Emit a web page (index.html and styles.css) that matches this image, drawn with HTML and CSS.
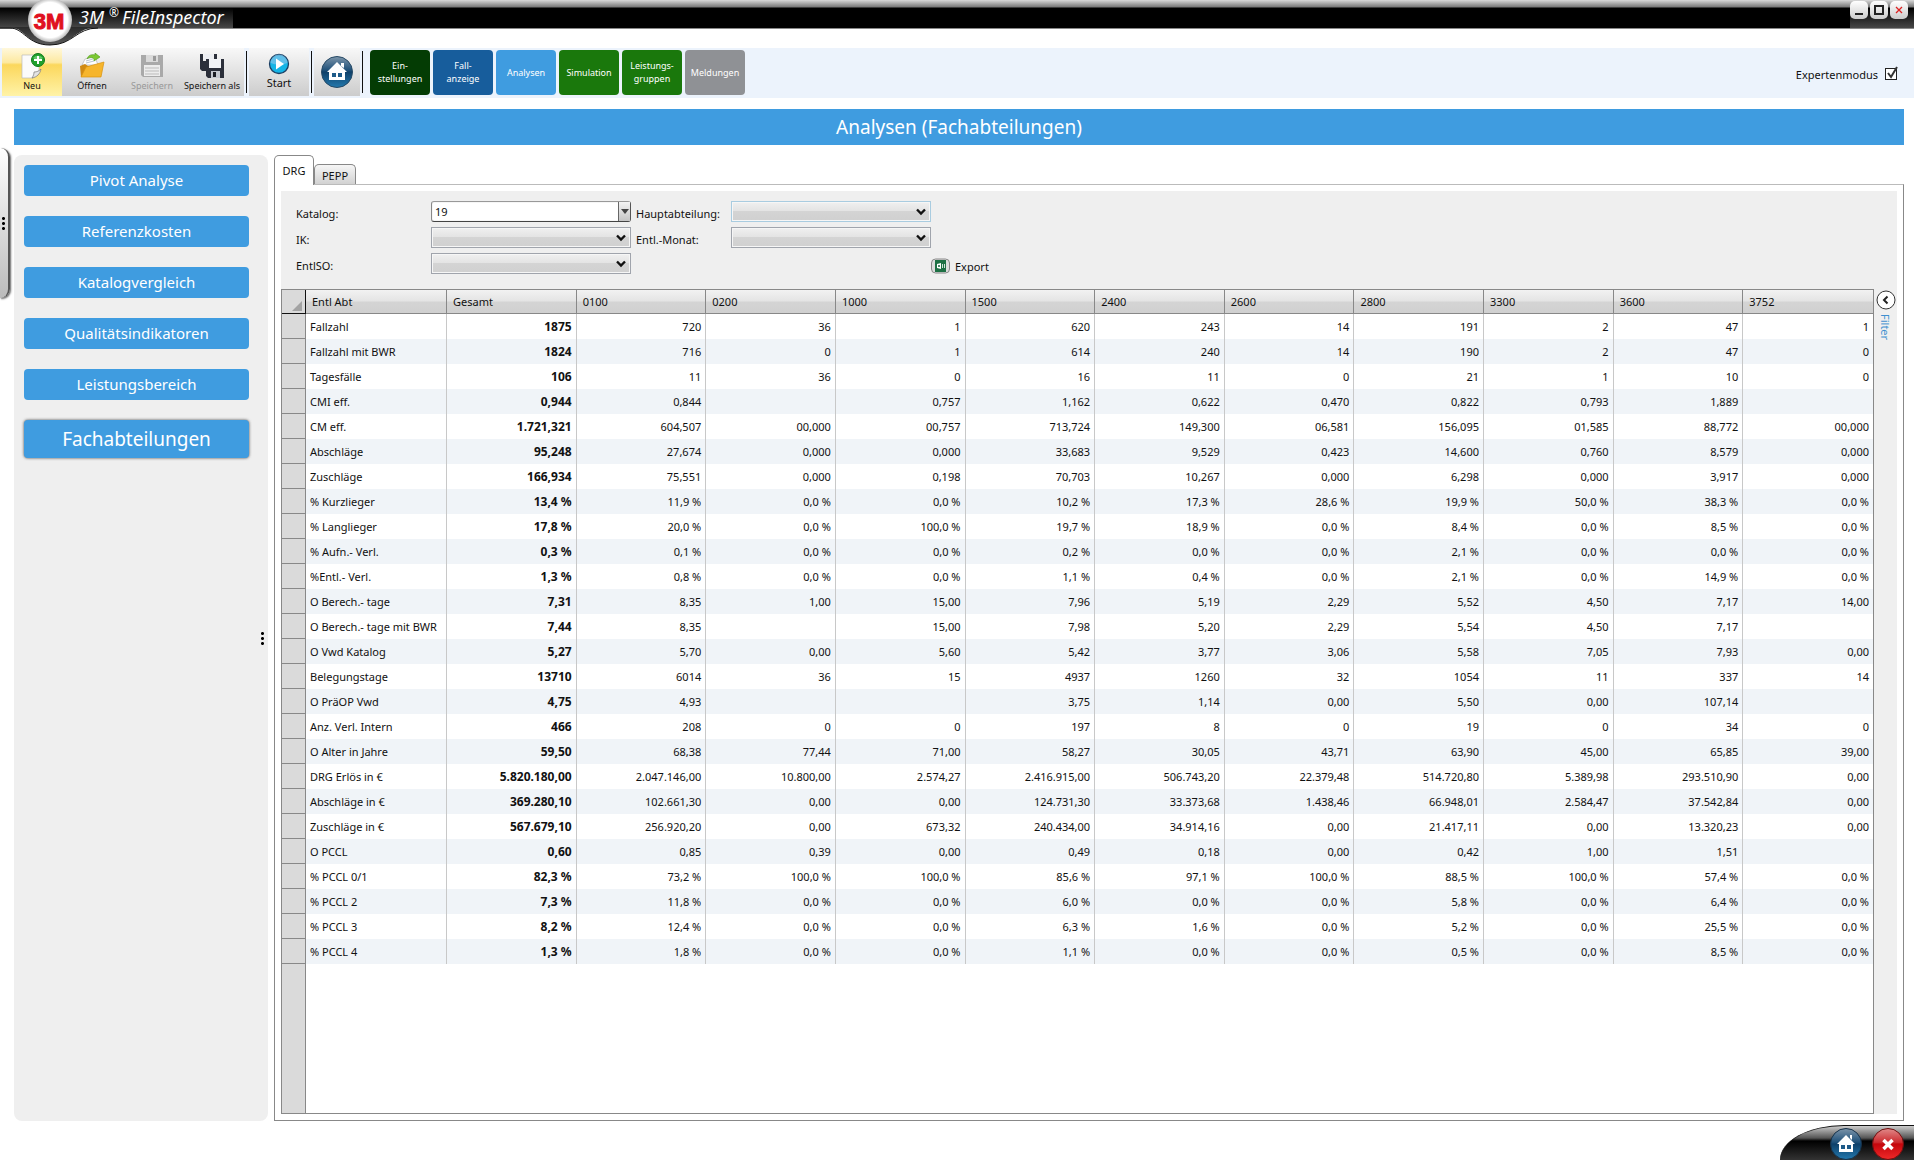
FILE: index.html
```html
<!DOCTYPE html>
<html lang="de">
    <head>
        <title>3M FileInspector</title>
        <meta charset="utf-8">
        <meta name="viewport" content="width=device-width, initial-scale=1">
        <link rel="stylesheet" href="styles.css">
    </head>
    <body>
        <header class="titlebar">
            <div class="brand">
                <svg class="logo" width="100" height="46" viewBox="0 0 100 46">
                    <defs>
                        <linearGradient id="bulge" x1="0" y1="0" x2="0" y2="1">
                            <stop offset="0" stop-color="#2a2a2a"/>
                            <stop offset="1" stop-color="#5a5a5a"/>
                        </linearGradient>
                        <radialGradient id="disc">
                            <stop offset="0.8" stop-color="#fff"/>
                            <stop offset="1" stop-color="#b8b8b8"/>
                        </radialGradient>
                    </defs>
                    <path d="M0 27 H10 C24 27 27 45 50 45 C73 45 76 27 98 27 Z" fill="url(#bulge)"/>
                    <path d="M0 28 H10 C24 28 27 45 50 45 C73 45 76 28 98 28" fill="none" stroke="#111"/>
                    <circle cx="50" cy="20" r="22" fill="url(#disc)"/>
                    <text x="49" y="29" class="logo-text">3M</text>
                </svg>
                <h1 class="app-name">3M<sup>®</sup>FileInspector</h1>
            </div>
            <div class="window-buttons">
                <button class="win-btn" aria-label="Minimieren"><svg width="12" height="12" viewBox="0 0 12 12"><path d="M2 10H10" stroke="#222" stroke-width="2"/></svg></button>
                <button class="win-btn" aria-label="Maximieren"><svg width="12" height="12" viewBox="0 0 12 12"><path d="M2 2H10V10H2Z" fill="none" stroke="#222" stroke-width="2"/></svg></button>
                <button class="win-btn" aria-label="Schließen"><svg width="12" height="12" viewBox="0 0 12 12"><path d="M3 3L9 9M9 3L3 9" stroke="#d22" stroke-width="1.3"/></svg></button>
            </div>
        </header>

        <div class="toolbar">
            <div class="tool-group">
                <button class="tool tool-new">
                    <svg width="26" height="26" viewBox="0 0 26 26">
                        <path d="M3 2H20V19L14 25H3Z" fill="#fbfbfb" stroke="#bbb" stroke-width=".7"/>
                        <path d="M22 16C21 21 18 24 13 25C15 22 15 20 15 19C18 19 20 18 22 16Z" fill="#e4e4e4" stroke="#777" stroke-width=".7"/>
                        <circle cx="19" cy="7" r="6.5" fill="#1fa02c" stroke="#0c7a18"/>
                        <path d="M14 5A6 5 0 0 1 24 5Q19 8 14 5" fill="#7fd986" opacity=".7"/>
                        <path d="M19 3V11M15 7H23" stroke="#fff" stroke-width="2"/>
                    </svg>
                    <span>Neu</span>
                </button>
                <button class="tool">
                    <svg width="26" height="26" viewBox="0 0 26 26">
                        <path d="M3 12L6 6L16 4L19 12Z" fill="#fff" stroke="#aaa" stroke-width=".6"/>
                        <path d="M7 8L14 6M7 10L15 8" stroke="#b9c4d0"/>
                        <path d="M2 24L1 13L6 11L9 13H21V22L20 24Z" fill="#d08a14"/>
                        <path d="M2 24L7 14L25 9L22 24Z" fill="#f6b52c" stroke="#d9920f" stroke-width=".7"/>
                        <path d="M8 6C9 2 13 1 16 2V0L21 4L15 8V6C13 4 10 4 8 6Z" fill="#7cc832" stroke="#4c9a17" stroke-width=".6"/>
                    </svg>
                    <span>Öffnen</span>
                </button>
                <button class="tool" disabled>
                    <svg width="26" height="26" viewBox="0 0 26 26">
                        <path d="M2 2H24V24H4L2 22Z" fill="#a9a9a9"/>
                        <path d="M7 2H19V9H7Z" fill="#dadada"/>
                        <path d="M14 3H17V8H14Z" fill="#999"/>
                        <path d="M5 12H21V23H5Z" fill="#ececec"/>
                        <path d="M6 15H20M6 18H20M6 21H20" stroke="#bbb"/>
                    </svg>
                    <span>Speichern</span>
                </button>
                <button class="tool">
                    <svg width="26" height="26" viewBox="0 0 26 26">
                        <path d="M1 1H4V8H15V1H18V18H3L1 16Z" fill="#2b2f3a"/>
                        <path d="M5 1H14V7H5Z" fill="#eceef2"/>
                        <path d="M7 6H25V25H9L7 23Z" fill="#2b2f3a"/>
                        <path d="M10 6H22V15H10Z" fill="#f1f3f6"/>
                        <path d="M12 18H21V25H12Z" fill="#c4c8cf"/>
                        <path d="M14 19H17V24H14Z" fill="#1b1d24"/>
                    </svg>
                    <span>Speichern als</span>
                </button>
            </div>
            <div class="separator"></div>
            <button class="tool tool-start">
                <svg width="22" height="22" viewBox="0 0 22 22">
                    <circle cx="11" cy="11" r="9.5" fill="#14b4e6" stroke="#1d3f63" stroke-width="1.3"/>
                    <path d="M2.500 10A8.500 8.500 0 0 1 19.500 10Q11 13 2.500 10Z" fill="#7fc3ea" opacity=".7"/>
                    <path d="M8 5.500L16 11L8 16.500Z" fill="#fff"/>
                </svg>
                <span>Start</span>
            </button>
            <div class="separator"></div>
            <button class="tool tool-home" aria-label="Startseite">
                <svg width="34" height="34" viewBox="0 0 34 34">
                    <defs>
                        <linearGradient id="blueball" x1="0" y1="0" x2="0" y2="1">
                            <stop offset="0" stop-color="#7d95aa"/>
                            <stop offset="0.450" stop-color="#1d4f78"/>
                            <stop offset="0.500" stop-color="#0f4069"/>
                            <stop offset="1" stop-color="#2379ae"/>
                        </linearGradient>
                    </defs>
                    <circle cx="17" cy="17" r="15.500" fill="url(#blueball)" stroke="#274a66"/>
                    <path d="M17 7L27 17H25V25H9V17H7Z" fill="#fff"/>
                    <path d="M21 8H24V13L21 11Z" fill="#fff"/>
                    <path d="M12 18H16V22H12ZM18 18H22V22H18Z" fill="#1d5a88"/>
                </svg>
            </button>
            <div class="separator"></div>
            <nav class="modules">
                <a href="#" class="module dark-green">Ein-<br>stellungen</a>
                <a href="#" class="module dark-blue">Fall-<br>anzeige</a>
                <a href="#" class="module blue">Analysen</a>
                <a href="#" class="module green">Simulation</a>
                <a href="#" class="module green">Leistungs-<br>gruppen</a>
                <a href="#" class="module gray">Meldungen</a>
            </nav>
            <label class="expert">Expertenmodus
                <span class="check">
                    <input type="checkbox" checked>
                    <svg width="14" height="14" viewBox="0 0 14 14"><path d="M3 7L6 11L12 1" fill="none" stroke="#333" stroke-width="2"/></svg>
                </span>
            </label>
        </div>

        <h2 class="page-title">Analysen (Fachabteilungen)</h2>

        <main class="workspace">
            <div class="drawer"><span class="dots"></span></div>
            <aside class="sidebar">
                <nav class="side-nav">
                    <a href="#" class="side-link">Pivot Analyse</a>
                    <a href="#" class="side-link">Referenzkosten</a>
                    <a href="#" class="side-link">Katalogvergleich</a>
                    <a href="#" class="side-link">Qualitätsindikatoren</a>
                    <a href="#" class="side-link">Leistungsbereich</a>
                    <a href="#" class="side-link active">Fachabteilungen</a>
                </nav>
                <span class="dots"></span>
            </aside>

            <section class="content">
                <div class="tabs">
                    <button class="tab current">DRG</button>
                    <button class="tab">PEPP</button>
                </div>
                <div class="panel">
                    <div class="panel-main">
                        <form class="filters">
                            <label for="katalog">Katalog:</label>
                            <div class="combo editable">
                                <select id="katalog"><option>19</option></select>
                                <span class="drop"><svg width="8" height="5" viewBox="0 0 8 5"><path d="M0 0H8L4 5Z" fill="#444"/></svg></span>
                            </div>
                            <label for="hauptabteilung">Hauptabteilung:</label>
                            <div class="combo focused">
                                <select id="hauptabteilung"><option></option></select>
                                <svg class="arrow" width="10" height="8" viewBox="0 0 10 8"><path d="M1 1.500L5 5.500L9 1.500" fill="none" stroke="#111" stroke-width="2.400"/></svg>
                            </div>
                            <span></span>

                            <label for="ik">IK:</label>
                            <div class="combo">
                                <select id="ik"><option></option></select>
                                <svg class="arrow" width="10" height="8" viewBox="0 0 10 8"><path d="M1 1.500L5 5.500L9 1.500" fill="none" stroke="#111" stroke-width="2.400"/></svg>
                            </div>
                            <label for="monat">Entl.-Monat:</label>
                            <div class="combo">
                                <select id="monat"><option></option></select>
                                <svg class="arrow" width="10" height="8" viewBox="0 0 10 8"><path d="M1 1.500L5 5.500L9 1.500" fill="none" stroke="#111" stroke-width="2.400"/></svg>
                            </div>
                            <span></span>

                            <label for="entliso">EntlSO:</label>
                            <div class="combo">
                                <select id="entliso"><option></option></select>
                                <svg class="arrow" width="10" height="8" viewBox="0 0 10 8"><path d="M1 1.500L5 5.500L9 1.500" fill="none" stroke="#111" stroke-width="2.400"/></svg>
                            </div>
                            <button type="button" class="export">
                                <svg width="19" height="16" viewBox="0 0 19 16">
                                    <rect x=".5" y="1" width="18" height="14" rx="4" fill="#ddd" stroke="#888"/>
                                    <rect x="4" y="2" width="11" height="12" fill="#1d7044"/>
                                    <path d="M6 6L10 5V11L6 10Z" fill="#fff"/>
                                    <path d="M7 7L9 9M9 7L7 9" stroke="#1d7044" stroke-width=".8"/>
                                    <path d="M11 6H12V10H11ZM13 6H14V10H13Z" fill="#cfe6d8"/>
                                </svg>
                                Export
                            </button>
                        </form>

                        <div class="grid">
                            <table>
                                <colgroup>
                                    <col class="col-head">
                                    <col class="col-label">
                                    <col span="11">
                                </colgroup>
                                <thead>
                                    <tr><th class="corner"><svg width="10" height="10" viewBox="0 0 10 10"><path d="M10 0V10H0Z" fill="#a3a3a3"/></svg></th><th>Entl Abt</th><th>Gesamt</th><th>0100</th><th>0200</th><th>1000</th><th>1500</th><th>2400</th><th>2600</th><th>2800</th><th>3300</th><th>3600</th><th>3752</th></tr>
                                </thead>
                                <tbody>
                                    <tr><th></th><td>Fallzahl</td><td>1875</td><td>720</td><td>36</td><td>1</td><td>620</td><td>243</td><td>14</td><td>191</td><td>2</td><td>47</td><td>1</td></tr>
                                    <tr><th></th><td>Fallzahl mit BWR</td><td>1824</td><td>716</td><td>0</td><td>1</td><td>614</td><td>240</td><td>14</td><td>190</td><td>2</td><td>47</td><td>0</td></tr>
                                    <tr><th></th><td>Tagesfälle</td><td>106</td><td>11</td><td>36</td><td>0</td><td>16</td><td>11</td><td>0</td><td>21</td><td>1</td><td>10</td><td>0</td></tr>
                                    <tr><th></th><td>CMI eff.</td><td>0,944</td><td>0,844</td><td></td><td>0,757</td><td>1,162</td><td>0,622</td><td>0,470</td><td>0,822</td><td>0,793</td><td>1,889</td><td></td></tr>
                                    <tr><th></th><td>CM eff.</td><td>1.721,321</td><td>604,507</td><td>00,000</td><td>00,757</td><td>713,724</td><td>149,300</td><td>06,581</td><td>156,095</td><td>01,585</td><td>88,772</td><td>00,000</td></tr>
                                    <tr><th></th><td>Abschläge</td><td>95,248</td><td>27,674</td><td>0,000</td><td>0,000</td><td>33,683</td><td>9,529</td><td>0,423</td><td>14,600</td><td>0,760</td><td>8,579</td><td>0,000</td></tr>
                                    <tr><th></th><td>Zuschläge</td><td>166,934</td><td>75,551</td><td>0,000</td><td>0,198</td><td>70,703</td><td>10,267</td><td>0,000</td><td>6,298</td><td>0,000</td><td>3,917</td><td>0,000</td></tr>
                                    <tr><th></th><td>% Kurzlieger</td><td>13,4 %</td><td>11,9 %</td><td>0,0 %</td><td>0,0 %</td><td>10,2 %</td><td>17,3 %</td><td>28,6 %</td><td>19,9 %</td><td>50,0 %</td><td>38,3 %</td><td>0,0 %</td></tr>
                                    <tr><th></th><td>% Langlieger</td><td>17,8 %</td><td>20,0 %</td><td>0,0 %</td><td>100,0 %</td><td>19,7 %</td><td>18,9 %</td><td>0,0 %</td><td>8,4 %</td><td>0,0 %</td><td>8,5 %</td><td>0,0 %</td></tr>
                                    <tr><th></th><td>% Aufn.- Verl.</td><td>0,3 %</td><td>0,1 %</td><td>0,0 %</td><td>0,0 %</td><td>0,2 %</td><td>0,0 %</td><td>0,0 %</td><td>2,1 %</td><td>0,0 %</td><td>0,0 %</td><td>0,0 %</td></tr>
                                    <tr><th></th><td>%Entl.- Verl.</td><td>1,3 %</td><td>0,8 %</td><td>0,0 %</td><td>0,0 %</td><td>1,1 %</td><td>0,4 %</td><td>0,0 %</td><td>2,1 %</td><td>0,0 %</td><td>14,9 %</td><td>0,0 %</td></tr>
                                    <tr><th></th><td>O Berech.- tage</td><td>7,31</td><td>8,35</td><td>1,00</td><td>15,00</td><td>7,96</td><td>5,19</td><td>2,29</td><td>5,52</td><td>4,50</td><td>7,17</td><td>14,00</td></tr>
                                    <tr><th></th><td>O Berech.- tage mit BWR</td><td>7,44</td><td>8,35</td><td></td><td>15,00</td><td>7,98</td><td>5,20</td><td>2,29</td><td>5,54</td><td>4,50</td><td>7,17</td><td></td></tr>
                                    <tr><th></th><td>O Vwd Katalog</td><td>5,27</td><td>5,70</td><td>0,00</td><td>5,60</td><td>5,42</td><td>3,77</td><td>3,06</td><td>5,58</td><td>7,05</td><td>7,93</td><td>0,00</td></tr>
                                    <tr><th></th><td>Belegungstage</td><td>13710</td><td>6014</td><td>36</td><td>15</td><td>4937</td><td>1260</td><td>32</td><td>1054</td><td>11</td><td>337</td><td>14</td></tr>
                                    <tr><th></th><td>O PräOP Vwd</td><td>4,75</td><td>4,93</td><td></td><td></td><td>3,75</td><td>1,14</td><td>0,00</td><td>5,50</td><td>0,00</td><td>107,14</td><td></td></tr>
                                    <tr><th></th><td>Anz. Verl. Intern</td><td>466</td><td>208</td><td>0</td><td>0</td><td>197</td><td>8</td><td>0</td><td>19</td><td>0</td><td>34</td><td>0</td></tr>
                                    <tr><th></th><td>O Alter in Jahre</td><td>59,50</td><td>68,38</td><td>77,44</td><td>71,00</td><td>58,27</td><td>30,05</td><td>43,71</td><td>63,90</td><td>45,00</td><td>65,85</td><td>39,00</td></tr>
                                    <tr><th></th><td>DRG Erlös in €</td><td>5.820.180,00</td><td>2.047.146,00</td><td>10.800,00</td><td>2.574,27</td><td>2.416.915,00</td><td>506.743,20</td><td>22.379,48</td><td>514.720,80</td><td>5.389,98</td><td>293.510,90</td><td>0,00</td></tr>
                                    <tr><th></th><td>Abschläge in €</td><td>369.280,10</td><td>102.661,30</td><td>0,00</td><td>0,00</td><td>124.731,30</td><td>33.373,68</td><td>1.438,46</td><td>66.948,01</td><td>2.584,47</td><td>37.542,84</td><td>0,00</td></tr>
                                    <tr><th></th><td>Zuschläge in €</td><td>567.679,10</td><td>256.920,20</td><td>0,00</td><td>673,32</td><td>240.434,00</td><td>34.914,16</td><td>0,00</td><td>21.417,11</td><td>0,00</td><td>13.320,23</td><td>0,00</td></tr>
                                    <tr><th></th><td>O PCCL</td><td>0,60</td><td>0,85</td><td>0,39</td><td>0,00</td><td>0,49</td><td>0,18</td><td>0,00</td><td>0,42</td><td>1,00</td><td>1,51</td><td></td></tr>
                                    <tr><th></th><td>% PCCL 0/1</td><td>82,3 %</td><td>73,2 %</td><td>100,0 %</td><td>100,0 %</td><td>85,6 %</td><td>97,1 %</td><td>100,0 %</td><td>88,5 %</td><td>100,0 %</td><td>57,4 %</td><td>0,0 %</td></tr>
                                    <tr><th></th><td>% PCCL 2</td><td>7,3 %</td><td>11,8 %</td><td>0,0 %</td><td>0,0 %</td><td>6,0 %</td><td>0,0 %</td><td>0,0 %</td><td>5,8 %</td><td>0,0 %</td><td>6,4 %</td><td>0,0 %</td></tr>
                                    <tr><th></th><td>% PCCL 3</td><td>8,2 %</td><td>12,4 %</td><td>0,0 %</td><td>0,0 %</td><td>6,3 %</td><td>1,6 %</td><td>0,0 %</td><td>5,2 %</td><td>0,0 %</td><td>25,5 %</td><td>0,0 %</td></tr>
                                    <tr><th></th><td>% PCCL 4</td><td>1,3 %</td><td>1,8 %</td><td>0,0 %</td><td>0,0 %</td><td>1,1 %</td><td>0,0 %</td><td>0,0 %</td><td>0,5 %</td><td>0,0 %</td><td>8,5 %</td><td>0,0 %</td></tr>
                                </tbody>
                            </table>
                        </div>
                    </div>
                    <button class="filter-toggle">
                        <svg width="20" height="20" viewBox="0 0 20 20">
                            <circle cx="10" cy="10" r="9" fill="#fff" stroke="#333"/>
                            <path d="M11.500 6.500L8 10L11.500 13.500" fill="none" stroke="#222" stroke-width="2"/>
                        </svg>
                        <span>Filter</span>
                    </button>
                </div>
            </section>
        </main>

        <footer class="dock">
            <div class="dock-shape">
                <button class="ball" aria-label="Startseite">
                    <svg width="34" height="34" viewBox="0 0 34 34">
                        <circle cx="17" cy="17" r="15.500" fill="url(#blueball)" stroke="#17324a"/>
                        <path d="M17 8L26 17H24V25H10V17H8Z" fill="#fff"/>
                        <path d="M21 8H23V13L21 11Z" fill="#fff"/>
                        <path d="M12 18H16V22H12ZM18 18H22V22H18Z" fill="#1d5a88"/>
                    </svg>
                </button>
                <button class="ball" aria-label="Beenden">
                    <svg width="34" height="34" viewBox="0 0 34 34">
                        <defs>
                            <linearGradient id="redball" x1="0" y1="0" x2="0" y2="1">
                                <stop offset="0" stop-color="#e08a8a"/>
                                <stop offset="0.450" stop-color="#cc2a2e"/>
                                <stop offset="0.500" stop-color="#c4060c"/>
                                <stop offset="1" stop-color="#f02a2a"/>
                            </linearGradient>
                        </defs>
                        <circle cx="17" cy="17" r="15.500" fill="url(#redball)" stroke="#6e1010"/>
                        <path d="M12.500 13L21.500 22M21.500 13L12.500 22" stroke="#fff" stroke-width="3.500"/>
                    </svg>
                </button>
            </div>
        </footer>
    </body>
</html>
```
FILE: styles.css
```css
* {
    box-sizing: border-box;
}

html, body {
    margin: 0;
    padding: 0;
}

body {
    display: flex;
    flex-direction: column;
    min-height: 100vh;
    font-family: "Noto Sans", "Open Sans", sans-serif;
    font-size: 11px;
    color: #111;
    background-color: #fff;
}

button, select, input {
    font: inherit;
    color: inherit;
    margin: 0;
}

button {
    border: none;
    padding: 0;
    background: none;
    cursor: pointer;
}

a {
    color: #fff;
    text-decoration: none;
}

svg {
    display: block;
}

/* title bar */
.titlebar {
    display: flex;
    justify-content: space-between;
    height: 29px;
    background: linear-gradient(#d8d8d8, #777 7px, #000 8px);
    border-bottom: 1px solid #888;
}

.brand {
    position: relative;
    display: flex;
    align-items: center;
    width: 233px;
    padding-left: 79px;
    background: linear-gradient(#d8d8d8, #777 7px, #000 8px, #484848);
}

.logo {
    position: absolute;
    left: 0;
    top: 0;
}

.logo-text {
    font-family: "Liberation Sans", Arial, sans-serif;
    font-size: 22px;
    font-weight: bold;
    text-anchor: middle;
    fill: #e01020;
    stroke: #e01020;
}

.app-name {
    margin: 0;
    padding-top: 6px;
    font-size: 18px;
    line-height: 22px;
    font-weight: normal;
    font-style: italic;
    white-space: nowrap;
    color: #fff;
}

.app-name sup {
    margin: 0 3px 0 5px;
    font-size: 12px;
    line-height: 1px;
    font-style: normal;
}

.window-buttons {
    display: flex;
    gap: 2px;
    padding: 1px 6px 0 0;
    background: linear-gradient(#d8d8d8, #777 7px, #000 8px, #484848);
}

.win-btn {
    display: flex;
    align-items: center;
    justify-content: center;
    width: 18px;
    height: 18px;
    border-radius: 5px;
    background: linear-gradient(#fff, #ccc);
}

/* toolbar */
.toolbar {
    display: flex;
    align-items: center;
    height: 50px;
    margin-top: 19px;
    padding: 0 17px 2px 2px;
    background-color: #ecf3fc;
}

.tool-group {
    display: flex;
    padding-right: 2px;
    background: linear-gradient(#f8f8f8, #ccc);
}

.tool {
    display: flex;
    flex-direction: column;
    align-items: center;
    width: 60px;
    height: 48px;
    padding-top: 5px;
    font-size: 9px;
    line-height: 13px;
    white-space: nowrap;
    background: linear-gradient(#f8f8f8, #ccc);
}

.tool-group .tool {
    background: none;
}

.tool-group .tool-new {
    background: linear-gradient(#fff8dc, #fde9a0 30%, #fbd75c 35%, #fff3a8);
}

.tool:disabled {
    color: #999;
}

.tool-start {
    font-size: 11px;
    line-height: 16px;
}

.tool-home {
    width: 46px;
    padding-top: 7px;
}

.separator {
    width: 1px;
    height: 42px;
    margin: 0 2px;
    background-color: #111;
}

.modules {
    display: flex;
    gap: 3px;
    margin-left: 5px;
}

.module {
    display: flex;
    align-items: center;
    justify-content: center;
    width: 60px;
    height: 45px;
    border-radius: 4px;
    font-size: 9px;
    line-height: 13px;
    text-align: center;
}

.dark-green { background-color: #043c04; }
.dark-blue { background-color: #175d9c; }
.blue { background-color: #3f9ce0; }
.green { background-color: #1a780c; }
.gray { background-color: #8f9195; }

.expert {
    display: flex;
    align-items: center;
    gap: 7px;
    margin-left: auto;
    padding-top: 4px;
}

.check {
    position: relative;
}

.check input {
    display: block;
    appearance: none;
    width: 12px;
    height: 12px;
    border: 1px solid #222;
    background-color: #fff;
}

.check svg {
    position: absolute;
    left: 0;
    top: -2px;
    pointer-events: none;
}

.page-title {
    margin: 11px 10px 0 14px;
    font-size: 19px;
    line-height: 36px;
    font-weight: normal;
    text-align: center;
    color: #fff;
    background-color: #3f9ce0;
}

/* main area */
.workspace {
    position: relative;
    display: flex;
    flex: 1;
    gap: 6px;
    margin: 10px 10px 4px 14px;
}

/* pull-out handle on the window edge */
.drawer {
    position: absolute;
    left: -14px;
    top: -7px;
    display: flex;
    align-items: center;
    justify-content: flex-end;
    width: 10px;
    height: 150px;
    padding-right: 3px;
    border-radius: 0 9px 9px 0;
    border-right: 2px solid #555;
    background: linear-gradient(#fff, #bbb);
    box-shadow: 1px 1px 2px #666;
}

.dots {
    width: 3px;
    height: 15px;
    background: radial-gradient(circle, #000 1px, transparent 2px) 0 0 / 3px 5px;
}

.sidebar {
    display: flex;
    align-items: center;
    gap: 12px;
    width: 254px;
    padding-left: 10px;
    border-radius: 8px;
    background-color: #efefef;
}

.side-nav {
    display: flex;
    flex-direction: column;
    align-self: flex-start;
    gap: 20px;
    width: 225px;
    padding-top: 10px;
}

.side-link {
    border-radius: 4px;
    font-size: 15px;
    line-height: 31px;
    text-align: center;
    background-color: #3f9ce0;
}

.side-link.active {
    font-size: 19px;
    line-height: 38px;
    box-shadow: 0 0 3px #444;
}

.content {
    display: flex;
    flex: 1;
    flex-direction: column;
    min-width: 0;
}

.tabs {
    display: flex;
    align-items: flex-end;
    height: 30px;
}

.tab {
    width: 42px;
    height: 21px;
    border: 1px solid #888;
    border-bottom: none;
    border-radius: 5px 5px 0 0;
    background: linear-gradient(#f6f6f6, #d0d0d0);
}

.tab.current {
    z-index: 1;
    width: 40px;
    height: 30px;
    background: #fff;
}

.panel {
    display: flex;
    flex: 1;
    margin-top: -1px;
    padding: 6px;
    border: 1px solid #888;
    border-top-color: #bbb;
}

.panel-main {
    display: flex;
    flex: 1;
    flex-direction: column;
    min-width: 0;
    background-color: #efefef;
}

.filters {
    display: grid;
    grid-template-columns: 135px 200px 100px 200px 1fr;
    grid-auto-rows: 26px;
    height: 98px;
    padding: 10px 0 10px 15px;
}

.filters label {
    padding-top: 5px;
    line-height: 16px;
}

.filters label:nth-of-type(even) {
    margin-left: 5px;
}

.combo {
    position: relative;
}

.combo select {
    display: block;
    appearance: none;
    width: 100%;
    height: 21px;
    padding: 0 3px;
    border: 1px solid #a0a4ac;
    border-radius: 0;
    box-shadow: inset 0 0 0 1px #f6f6f6;
    background: linear-gradient(#f0f0f0, #e4e4e4 45%, #d4d4d4 50%, #d0d0d0);
}

.combo.focused select {
    border-color: #a9cce0;
}

.combo.editable select {
    border-color: #999 #555 #444 #888;
    border-radius: 3px;
    background: #fff;
}

.arrow {
    position: absolute;
    right: 5px;
    top: 7px;
    pointer-events: none;
}

.drop {
    position: absolute;
    right: 1px;
    top: 1px;
    display: flex;
    align-items: center;
    justify-content: center;
    width: 12px;
    height: 19px;
    border-left: 1px solid #666;
    background: linear-gradient(#f4f4f4, #c4c4c4);
    pointer-events: none;
}

.export {
    display: flex;
    grid-column: 5;
    align-items: center;
    gap: 5px;
    height: 26px;
}

/* data grid */
.grid {
    flex: 1;
    border: 1px solid #888;
    background: linear-gradient(90deg, #dadada 23px, #888 23px, #888 24px, #fff 24px);
}

table {
    width: 100%;
    table-layout: fixed;
    border-collapse: separate;
    border-spacing: 0;
}

.col-head {
    width: 24px;
}

.col-label {
    width: 141px;
}

th, td {
    height: 25px;
    padding: 0 4px;
    overflow: hidden;
    line-height: 16px;
    white-space: nowrap;
}

thead th {
    height: 24px;
    padding-left: 6px;
    border-right: 1px solid #888;
    border-bottom: 1px solid #888;
    font-weight: normal;
    text-align: left;
    background: linear-gradient(#f2f2f2, #e4e4e4 48%, #d4d4d4 52%, #d0d0d0);
}

thead th:last-child {
    border-right: none;
}

thead .corner {
    padding: 8px 1px 0 10px;
    border-color: #111;
    background: #dadada;
}

tbody th {
    border-right: 1px solid #888;
    border-bottom: 1px solid #888;
    background-color: #dadada;
}

tbody td {
    border-right: 1px solid #c8c8c8;
    text-align: right;
    background-color: #fff;
}

tbody td:last-child {
    border-right: none;
}

tbody tr:nth-child(even) td {
    background-color: #f0f4f8;
}

tbody td:nth-child(2) {
    text-align: left;
}

tbody td:nth-child(3) {
    font-size: 12px;
    font-weight: bold;
}

.filter-toggle {
    display: flex;
    flex-direction: column;
    align-items: center;
    gap: 4px;
    width: 23px;
    padding-top: 99px;
    background-color: #efefef;
}

.filter-toggle span {
    writing-mode: vertical-rl;
    color: #3f8fd0;
}

/* bottom dock */
.dock {
    display: flex;
    justify-content: flex-end;
    height: 35px;
    overflow: hidden;
}

.dock-shape {
    display: flex;
    gap: 8px;
    width: 134px;
    padding: 1px 0 0 49px;
    border-top: 1px solid #111;
    border-radius: 64px 0 0 0 / 35px 0 0 0;
    background: linear-gradient(#ccc, #555 12px, #000 15px, #333);
}

.ball {
    width: 34px;
    height: 34px;
}
```
